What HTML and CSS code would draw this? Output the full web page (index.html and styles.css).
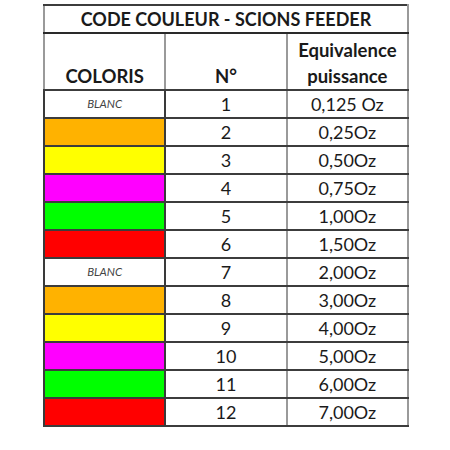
FILE: index.html
```html
<!DOCTYPE html>
<html lang="fr">
<head>
<meta charset="utf-8">
<title>Code couleur - Scions feeder</title>
<link rel="stylesheet" href="styles.css">
</head>
<body>
<table class="codes">
  <colgroup><col class="c1"><col class="c2"><col class="c3"></colgroup>
  <tr class="title"><th colspan="3">CODE COULEUR - SCIONS FEEDER</th></tr>
  <tr class="head"><th>COLORIS</th><th>N°</th><th>Equivalence<br>puissance</th></tr>
  <tr><td class="sw white">BLANC</td><td>1</td><td>0,125 Oz</td></tr>
  <tr><td class="sw orange"></td><td>2</td><td>0,25Oz</td></tr>
  <tr><td class="sw yellow"></td><td>3</td><td>0,50Oz</td></tr>
  <tr><td class="sw magenta"></td><td>4</td><td>0,75Oz</td></tr>
  <tr><td class="sw green"></td><td>5</td><td>1,00Oz</td></tr>
  <tr><td class="sw red"></td><td>6</td><td>1,50Oz</td></tr>
  <tr><td class="sw white">BLANC</td><td>7</td><td>2,00Oz</td></tr>
  <tr><td class="sw orange"></td><td>8</td><td>3,00Oz</td></tr>
  <tr><td class="sw yellow"></td><td>9</td><td>4,00Oz</td></tr>
  <tr><td class="sw magenta"></td><td>10</td><td>5,00Oz</td></tr>
  <tr><td class="sw green"></td><td>11</td><td>6,00Oz</td></tr>
  <tr><td class="sw red"></td><td>12</td><td>7,00Oz</td></tr>
</table>
</body>
</html>
```
FILE: styles.css
```css
html, body {
  margin: 0;
  padding: 0;
  background: #fff;
}
body {
  padding: 4px 0 0 43px;
  font-family: Lato, "Open Sans", sans-serif;
  color: #1a1a1a;
}
.codes {
  border-collapse: collapse;
  table-layout: fixed;
  width: 366px;
  border: 2px solid #3a3a3a;
}
.codes th, .codes td {
  padding: 0;
  text-align: center;
  border-left: 2px solid #9a9a9a;
  border-right: 2px solid #9a9a9a;
  border-top: 2px solid #3c3c3c;
  border-bottom: 2px solid #3c3c3c;
  font-size: 18px;
  line-height: 20px;
  height: 26px;
}
.codes .title th {
  font-weight: bold;
  font-size: 18px;
  height: 26px;
  border-bottom: 2px solid #2a2a2a;
}
.codes .head th {
  font-weight: bold;
  font-size: 18.5px;
  height: 55px;
  vertical-align: bottom;
  padding-bottom: 0;
  line-height: 26px;
}
.codes td.sw {
  border-left-color: #3a3a3a;
  border-right-color: #3a3a3a;
  font-style: italic;
  font-size: 11.5px;
  color: #444;
}
.white { background: #fff; }
.orange { background: #ffb200; }
.yellow { background: #ffff00; }
.magenta { background: #ff00ff; }
.green { background: #00ff00; }
.red { background: #ff0000; }
```
